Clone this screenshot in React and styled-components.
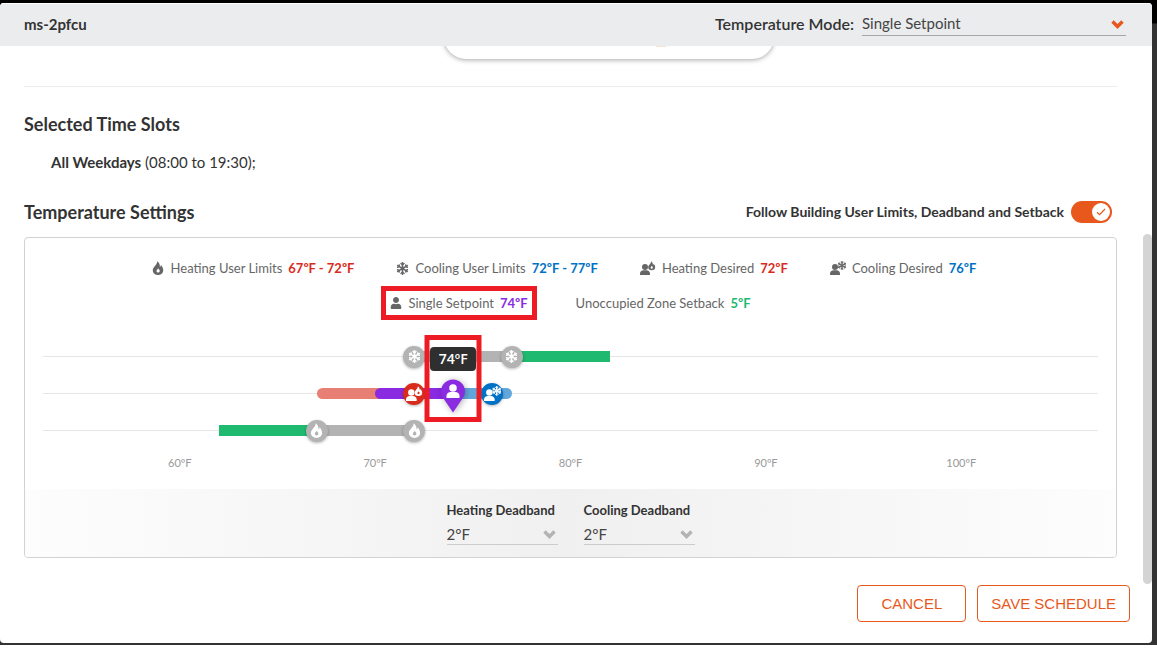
import React, { useState } from 'react';
import styled, { createGlobalStyle } from 'styled-components';
import { FaSnowflake, FaUser } from 'react-icons/fa';

const MIN_TEMP = 53;
const MAX_TEMP = 107;

const toPercent = temp => `${((temp - MIN_TEMP) / (MAX_TEMP - MIN_TEMP)) * 100}%`;

const colors = {
  text: '#333333',
  muted: '#666666',
  accent: '#e8581c',
  heat: '#d92b1c',
  cool: '#0072c6',
  purple: '#8a2be2',
  green: '#20b970',
  gray: '#b3b3b3',
  mark: '#ed1c24',
};

const GlobalStyle = createGlobalStyle`
  * {
    box-sizing: border-box;
  }

  body {
    margin: 0;
    background: #ffffff;
    color: ${colors.text};
    font-family: Lato, sans-serif;
    font-size: 15px;
    line-height: 20px;
  }
`;

const Backdrop = styled.div`
  padding: 3px 5px 2px 0;
  background: linear-gradient(#000000 23px, #333333 24px);
`;

const Dialog = styled.div`
  overflow: hidden;
  border-radius: 4px;
  background: #ffffff;
`;

const Header = styled.header`
  display: flex;
  align-items: center;
  justify-content: space-between;
  height: 43px;
  padding: 0 26px 3px 24px;
  border-top: 1px solid #ffffff;
  background: #ebecee;
`;

const Title = styled.h1`
  margin: 0;
  font-size: 15px;
  font-weight: 700;
`;

const ModeField = styled.div`
  display: flex;
  align-items: center;
  gap: 8px;
`;

const ModeLabel = styled.label`
  font-size: 16px;
  font-weight: 600;
`;

const SelectBox = styled.div`
  display: grid;
  align-items: center;
  width: ${props => props.$width};
  border-bottom: 1px solid ${props => props.$line};

  & > * {
    grid-area: 1 / 1;
  }

  svg {
    justify-self: end;
    margin-top: ${props => (props.$compact ? '0' : '3px')};
    margin-right: 2px;
    pointer-events: none;
  }
`;

const Select = styled.select`
  width: 100%;
  height: ${props => (props.$compact ? '20px' : '24px')};
  padding: 0;
  border: none;
  outline: none;
  appearance: none;
  background: transparent;
  color: #444444;
  font-family: inherit;
  font-size: 15px;
`;

const Body = styled.div`
  display: flex;
  overflow: hidden;
`;

const Content = styled.main`
  flex: 1;
  min-width: 0;
  padding: 0 26px 26px 24px;
`;

const ScrollRail = styled.div`
  display: flex;
  align-items: flex-end;
  width: 9px;
`;

const ScrollThumb = styled.div`
  width: 9px;
  height: 65%;
  border-radius: 5px;
  background: #d4d4d4;
`;

const ScheduleCard = styled.div`
  display: flex;
  justify-content: center;
  width: 330px;
  height: 53px;
  margin: -40px 0 0 420px;
  padding: 40px 0 0 103px;
  border-radius: 22px;
  background: #ffffff;
  box-shadow: 0 1px 5px rgba(0, 0, 0, 0.35);
`;

const SlotEdge = styled.div`
  width: 10px;
  height: 1px;
  background: #fbe0d8;
`;

const Divider = styled.hr`
  height: 1px;
  margin: 27px 0;
  border: none;
  background: #ececec;
`;

const SectionTitle = styled.h2`
  margin: 0;
  font-size: 18px;
  font-weight: 700;
  line-height: 20px;
`;

const Slots = styled.p`
  margin: 18px 0 28px 27px;
`;

const SettingsHeader = styled.div`
  display: flex;
  align-items: center;
  justify-content: space-between;
  height: 24px;
  margin-bottom: 13px;
  padding-right: 5px;
`;

const ToggleLabel = styled.label`
  display: flex;
  align-items: center;
  gap: 7px;
  font-size: 14px;
  font-weight: 700;
`;

const Toggle = styled.span`
  display: grid;
  align-items: center;
  width: 41px;
  height: 22px;
  border-radius: 11px;
  background: ${props => (props.$on ? colors.accent : colors.gray)};

  & > * {
    grid-area: 1 / 1;
  }
`;

const ToggleInput = styled.input`
  width: 41px;
  height: 22px;
  margin: 0;
  opacity: 0;
`;

const Knob = styled.span`
  display: flex;
  align-items: center;
  justify-content: center;
  justify-self: ${props => (props.$on ? 'end' : 'start')};
  width: 18px;
  height: 18px;
  margin: 0 2px;
  border-radius: 50%;
  background: #ffffff;
  pointer-events: none;
`;

const Panel = styled.section`
  overflow: hidden;
  border: 1px solid #d2d2d2;
  border-radius: 4px;
`;

const Legend = styled.div`
  display: flex;
  flex-direction: column;
  gap: 15px;
  padding-top: 20px;
`;

const LegendRow = styled.div`
  display: flex;
  justify-content: center;
  gap: ${props => (props.$secondary ? '44px' : '38px')};
  padding-right: ${props => (props.$secondary ? '0' : '14px')};
`;

const LegendItem = styled.div`
  display: flex;
  align-items: center;
  gap: 6px;
  padding: 0 2px;
  color: ${colors.muted};
  font-size: 13px;
  white-space: nowrap;
  outline: ${props => (props.$marked ? `5px solid ${colors.mark}` : 'none')};
  outline-offset: 2px;

  svg {
    flex: none;
  }
`;

const LegendValue = styled.strong`
  color: ${props => props.$color};
  font-weight: 700;
`;

const Chart = styled.div`
  position: relative;
  margin-top: 25px;
  padding: 0 18px;
`;

const Track = styled.div`
  position: relative;
  display: flex;
  align-items: center;
  height: 37px;

  &::before {
    content: '';
    width: 100%;
    height: 1px;
    background: #e6e6e6;
  }
`;

const Segment = styled.div`
  position: absolute;
  top: 13px;
  height: 11px;
  border-radius: ${props => props.$radius || '0'};
  background: ${props => props.$color};
`;

const Handle = styled.div`
  position: absolute;
  top: 50%;
  display: flex;
  align-items: center;
  justify-content: center;
  width: 22px;
  height: 22px;
  border-radius: 50%;
  transform: translate(-50%, -50%);
  background: ${props => props.$color};
  box-shadow: 0 1px 3px rgba(0, 0, 0, 0.3);
  color: #ffffff;
`;

const Pin = styled.div`
  position: absolute;
  top: 4px;
  z-index: 2;
  transform: translateX(-50%);
  filter: drop-shadow(1px 1px 3px rgba(0, 0, 0, 0.3));

  svg {
    display: block;
  }
`;

const Tooltip = styled.div`
  position: absolute;
  bottom: 41px;
  z-index: 2;
  width: 46px;
  height: 24px;
  border-radius: 4px;
  transform: translateX(-50%);
  background: #2f2f2f;
  color: #ffffff;
  font-family: 'Open Sans', sans-serif;
  font-size: 14px;
  font-weight: 600;
  line-height: 24px;
  text-align: center;
`;

const PinMark = styled.div`
  position: absolute;
  top: -40px;
  z-index: 3;
  width: 57px;
  height: 87px;
  border: 5px solid ${colors.mark};
  transform: translateX(-50%);
  pointer-events: none;
`;

const Scale = styled.div`
  position: relative;
  height: 40px;
`;

const Tick = styled.span`
  position: absolute;
  top: 4px;
  transform: translateX(-50%);
  color: #999999;
  font-size: 11px;
`;

const DeadbandBar = styled.div`
  display: flex;
  justify-content: center;
  gap: 26px;
  padding: 11px 0 12px;
  background: linear-gradient(90deg, #fdfdfd, #f0f0f0 50%, #fdfdfd);
`;

const Deadband = styled.div`
  display: flex;
  flex-direction: column;
  gap: 4px;
`;

const DeadbandLabel = styled.label`
  font-size: 13px;
  font-weight: 700;
`;

const Footer = styled.footer`
  display: flex;
  justify-content: flex-end;
  gap: 11px;
  padding: 1px 22px 21px;
`;

const Button = styled.button`
  height: 37px;
  padding: 0 ${props => (props.$wide ? '23px' : '13px')};
  border: 1px solid ${colors.accent};
  border-radius: 4px;
  background: #ffffff;
  color: ${colors.accent};
  font-family: 'Liberation Sans', sans-serif;
  font-size: 15px;
  cursor: pointer;
`;

const flamePath =
  'M10.6 0.5C11 4 8.4 6.6 6 9.6C4 12 3 13.8 3 16.2A9 7.8 0 0 0 21 16.2C21 12.4 19.2 9 17 6.8C17 8.4 16.4 9.6 15.2 10.4C15.6 6.4 14 2.6 10.6 0.5ZM12.4 12.4C12.8 14 15 14.8 15 17A2.8 2.8 0 0 1 9.4 17C9.4 15 11.6 14.4 12.4 12.4Z';

const FlameIcon = ({ size = 14 }) => (
  <svg width={size} height={size} viewBox="0 0 24 24" fill="currentColor" fillRule="evenodd">
    <path d={flamePath} />
  </svg>
);

const UserFlameIcon = ({ size = 16 }) => (
  <svg width={size} height={size} viewBox="0 0 32 32" fill="currentColor" fillRule="evenodd">
    <circle cx="10" cy="14" r="6" />
    <path d="M0 30V27C0 23 3 20.5 7 20.5H13C17 20.5 20 23 20 27V30Z" />
    <path transform="translate(14 2) scale(0.78)" d={flamePath} />
  </svg>
);

const UserSnowIcon = ({ size = 16 }) => (
  <svg width={size} height={size} viewBox="0 0 32 32" fill="currentColor">
    <circle cx="10" cy="14" r="6" />
    <path d="M0 30V27C0 23 3 20.5 7 20.5H13C17 20.5 20 23 20 27V30Z" />
    <g stroke="currentColor" strokeWidth="2.6">
      <path d="M24 2V20M16.2 6.5L31.8 15.5M31.8 6.5L16.2 15.5" />
      <path
        fill="none"
        strokeWidth="1.8"
        d="M21 3.5L24 6.5L27 3.5M21 18.5L24 15.5L27 18.5M16 10L20 9L19 5M32 10L28 9L29 5M16 12L20 13L19 17M32 12L28 13L29 17"
      />
    </g>
  </svg>
);

const Chevron = ({ color }) => (
  <svg width="13" height="9" viewBox="0 0 13 9" fill="none">
    <path d="M1.5 1.5L6.5 6.5L11.5 1.5" stroke={color} strokeWidth="3.4" />
  </svg>
);

const legendRows = [
  [
    { icon: <FlameIcon size={14} />, label: 'Heating User Limits', value: '67ºF - 72ºF', color: colors.heat },
    { icon: <FaSnowflake size={13} />, label: 'Cooling User Limits', value: '72ºF - 77ºF', color: colors.cool },
    { icon: <UserFlameIcon size={16} />, label: 'Heating Desired', value: '72ºF', color: colors.heat },
    { icon: <UserSnowIcon size={16} />, label: 'Cooling Desired', value: '76ºF', color: colors.cool },
  ],
  [
    { icon: <FaUser size={12} />, label: 'Single Setpoint', value: '74ºF', color: colors.purple, marked: true },
    { label: 'Unoccupied Zone Setback', value: '5ºF', color: colors.green },
  ],
];

const Range = ({ from, to, ...props }) => (
  <Segment
    style={{ left: toPercent(from), width: `${((to - from) / (MAX_TEMP - MIN_TEMP)) * 100}%` }}
    {...props}
  />
);

const DeadbandSelect = ({ id, label, value, onChange }) => (
  <Deadband>
    <DeadbandLabel htmlFor={id}>{label}</DeadbandLabel>
    <SelectBox $width="111px" $line="#cccccc" $compact>
      <Select id={id} value={value} onChange={e => onChange(e.target.value)} $compact>
        {['1', '2', '3', '4', '5'].map(n => (
          <option key={n} value={n}>{n}°F</option>
        ))}
      </Select>
      <Chevron color={colors.gray} />
    </SelectBox>
  </Deadband>
);

const App = () => {
  const [mode, setMode] = useState('single');
  const [follow, setFollow] = useState(true);
  const [heatingDeadband, setHeatingDeadband] = useState('2');
  const [coolingDeadband, setCoolingDeadband] = useState('2');

  return (
    <>
      <GlobalStyle />
      <Backdrop>
        <Dialog>
          <Header>
            <Title>ms-2pfcu</Title>
            <ModeField>
              <ModeLabel htmlFor="mode">Temperature Mode:</ModeLabel>
              <SelectBox $width="264px" $line="#a6a6a6">
                <Select id="mode" value={mode} onChange={e => setMode(e.target.value)}>
                  <option value="single">Single Setpoint</option>
                  <option value="dual">Dual Setpoint</option>
                </Select>
                <Chevron color={colors.accent} />
              </SelectBox>
            </ModeField>
          </Header>

          <Body>
            <Content>
              <ScheduleCard>
                <SlotEdge />
              </ScheduleCard>
              <Divider />

              <SectionTitle>Selected Time Slots</SectionTitle>
              <Slots>
                <strong>All Weekdays</strong> (08:00 to 19:30);
              </Slots>

              <SettingsHeader>
                <SectionTitle>Temperature Settings</SectionTitle>
                <ToggleLabel>
                  Follow Building User Limits, Deadband and Setback
                  <Toggle $on={follow}>
                    <ToggleInput
                      type="checkbox"
                      checked={follow}
                      onChange={() => setFollow(!follow)}
                    />
                    <Knob $on={follow}>
                      <svg width="10" height="8" viewBox="0 0 10 8" fill="none">
                        <path d="M1 4.2L3.6 6.6L9 1" stroke={colors.accent} strokeWidth="1.2" />
                      </svg>
                    </Knob>
                  </Toggle>
                </ToggleLabel>
              </SettingsHeader>

              <Panel>
                <Legend>
                  {legendRows.map((row, i) => (
                    <LegendRow key={i} $secondary={i > 0}>
                      {row.map(item => (
                        <LegendItem key={item.label} $marked={item.marked}>
                          {item.icon}
                          <span>{item.label}</span>
                          <LegendValue $color={item.color}>{item.value}</LegendValue>
                        </LegendItem>
                      ))}
                    </LegendRow>
                  ))}
                </Legend>

                <Chart>
                  <Track>
                    <Range from={72} to={77} $color={colors.gray} />
                    <Range from={77} to={82} $color={colors.green} />
                    <Handle $color={colors.gray} style={{ left: toPercent(72) }}>
                      <FaSnowflake size={13} />
                    </Handle>
                    <Handle $color={colors.gray} style={{ left: toPercent(77) }}>
                      <FaSnowflake size={13} />
                    </Handle>
                  </Track>
                  <Track>
                    <Range from={67} to={71} $color="#e87f75" $radius="6px 0 0 6px" />
                    <Range from={73} to={77} $color="#62a7dc" $radius="0 6px 6px 0" />
                    <Range from={70} to={74} $color={colors.purple} $radius="6px 0 0 6px" />
                    <Handle $color={colors.heat} style={{ left: toPercent(72) }}>
                      <UserFlameIcon size={17} />
                    </Handle>
                    <Handle $color={colors.cool} style={{ left: toPercent(76) }}>
                      <UserSnowIcon size={17} />
                    </Handle>
                    <Tooltip style={{ left: toPercent(74) }}>74ºF</Tooltip>
                    <Pin style={{ left: toPercent(74) }}>
                      <svg width="26" height="34" viewBox="0 0 26 34">
                        <path
                          d="M13 0.5A12 12 0 0 1 25 12.5C25 15 24.2 17 23 18.8L13 33.5L3 18.8C1.8 17 1 15 1 12.5A12 12 0 0 1 13 0.5Z"
                          fill={colors.purple}
                        />
                        <circle cx="13" cy="9" r="3.8" fill="#fff" />
                        <path d="M6.5 19V17C6.5 14.6 8.4 13 11 13H15C17.6 13 19.5 14.6 19.5 17V19Z" fill="#fff" />
                      </svg>
                    </Pin>
                    <PinMark style={{ left: toPercent(74) }} />
                  </Track>
                  <Track>
                    <Range from={62} to={67} $color={colors.green} />
                    <Range from={67} to={72} $color={colors.gray} />
                    <Handle $color={colors.gray} style={{ left: toPercent(67) }}>
                      <FlameIcon size={15} />
                    </Handle>
                    <Handle $color={colors.gray} style={{ left: toPercent(72) }}>
                      <FlameIcon size={15} />
                    </Handle>
                  </Track>
                  <Scale>
                    {[60, 70, 80, 90, 100].map(temp => (
                      <Tick key={temp} style={{ left: toPercent(temp) }}>{temp}ºF</Tick>
                    ))}
                  </Scale>
                </Chart>

                <DeadbandBar>
                  <DeadbandSelect
                    id="heating-deadband"
                    label="Heating Deadband"
                    value={heatingDeadband}
                    onChange={setHeatingDeadband}
                  />
                  <DeadbandSelect
                    id="cooling-deadband"
                    label="Cooling Deadband"
                    value={coolingDeadband}
                    onChange={setCoolingDeadband}
                  />
                </DeadbandBar>
              </Panel>
            </Content>
            <ScrollRail>
              <ScrollThumb />
            </ScrollRail>
          </Body>

          <Footer>
            <Button type="button" $wide>CANCEL</Button>
            <Button type="button">SAVE SCHEDULE</Button>
          </Footer>
        </Dialog>
      </Backdrop>
    </>
  );
};

export default App;
